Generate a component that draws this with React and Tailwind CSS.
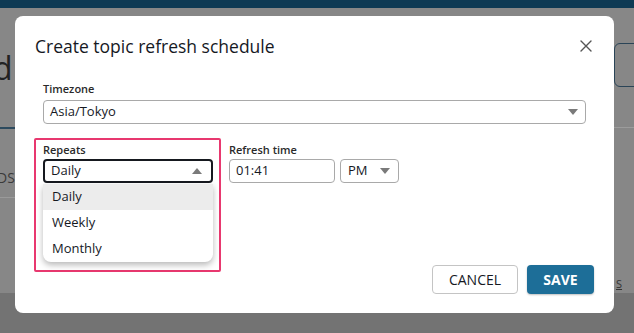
const font = { fontFamily: '"Open Sans", "Noto Sans", sans-serif' };

function Caret({ up = false, className = "" }) {
  return (
    <svg width="10" height="6" viewBox="0 0 10 6" className={className}>
      {up ? <path d="M0 6 L5 0 L10 6 Z" fill="#7a7a7a" /> : <path d="M0 0 L10 0 L5 6 Z" fill="#7a7a7a" />}
    </svg>
  );
}

function Backdrop() {
  return (
    <div className="w-[634px] h-[333px] flex flex-col bg-[#878787] overflow-hidden">
      <div className="h-[8px] bg-[#0e3a54]" />
      <div className="flex-1 flex justify-between">
        {/* left strip of page behind */}
        <div className="w-[15px] flex flex-col">
          <div className="h-[40px]" />
          <div className="text-[32px] leading-[40px] text-[#222] -ml-[7px]">d</div>
          <div className="h-[39px]" />
          <div className="h-[2px] bg-[#2c4a5e]" />
          <div className="h-[40px]" />
          <div className="text-[14px] leading-[18px] text-[#3a3a3a] -ml-[3px]">DS</div>
          <div className="h-[10px]" />
          <div className="h-px bg-[#9a9a9a]" />
        </div>
        {/* right strip */}
        <div className="w-[20px] flex flex-col">
          <div className="h-[35px]" />
          <div className="h-[44px] w-[30px] border-[1.5px] border-[#2a4457] rounded-[6px]" />
          <div className="h-[40px]" />
          <div className="h-px bg-[#9c9c9c]" />
          <div className="h-[149px]" />
          <div className="text-[11px] leading-[14px] text-[#333] underline pl-[2px]">S</div>
        </div>
      </div>
      <div className="h-[40px] bg-[#737373]" />
    </div>
  );
}

export default function App() {
  return (
    <div className="relative w-[634px] h-[333px] overflow-hidden" style={font}>
      <Backdrop />

      <div className="absolute left-[15px] top-[16px] w-[599px] h-[297px] bg-white rounded-[8px] flex flex-col">
        {/* header */}
        <div className="flex items-center justify-between pl-[20px] pr-[22px] pt-[18px] h-[42px]">
          <h1 className="text-[17.5px] leading-[24px] text-[#16191f] font-normal">Create topic refresh schedule</h1>
          <svg width="12" height="12" viewBox="0 0 12 12">
            <path d="M1 1 L11 11 M11 1 L1 11" stroke="#555" strokeWidth="1.4" strokeLinecap="round" />
          </svg>
        </div>

        <div className="px-[28px] pt-[24px]">
          <div className="text-[11px] leading-[14px] font-semibold text-[#2a2a2a] mb-[4px]">Timezone</div>
          <div className="h-[24px] border border-[#a9a9a9] rounded-[4px] flex items-center justify-between pl-[6px] pr-[7px]">
            <span className="text-[13px] text-[#16191f]">Asia/Tokyo</span>
            <Caret />
          </div>

          <div className="flex gap-[16px] mt-[19px]">
            {/* Repeats */}
            <div className="relative w-[170px]">
              <div className="absolute -left-[9px] -top-[5px] w-[187px] h-[134px] border-2 border-[#e8386f] rounded-[2px] pointer-events-none" />
              <div className="text-[11px] leading-[14px] font-semibold text-[#2a2a2a] mb-[2px]">Repeats</div>
              <div className="h-[24px] border-2 border-[#16191f] rounded-[4px] flex items-center justify-between pl-[6px] pr-[9px]">
                <span className="text-[13px] text-[#16191f]">Daily</span>
                <Caret up />
              </div>
              <div className="absolute left-0 top-[41px] w-[170px] bg-white rounded-b-[8px] shadow-[0_3px_6px_rgba(0,0,0,0.28)] overflow-hidden">
                {["Daily", "Weekly", "Monthly"].map((o, i) => (
                  <div
                    key={o}
                    className={`h-[26px] flex items-center pl-[9px] text-[13px] text-[#16191f] ${i === 0 ? "bg-[#ececec]" : ""}`}
                  >
                    {o}
                  </div>
                ))}
              </div>
            </div>

            {/* Refresh time */}
            <div>
              <div className="text-[11px] leading-[14px] font-semibold text-[#2a2a2a] mb-[2px]">Refresh time</div>
              <div className="flex gap-[5px]">
                <div className="w-[106px] h-[24px] border border-[#a9a9a9] rounded-[4px] flex items-center pl-[6px]">
                  <span className="text-[13px] text-[#16191f]">01:41</span>
                </div>
                <div className="w-[59px] h-[24px] border border-[#a9a9a9] rounded-[4px] flex items-center justify-between pl-[7px] pr-[8px]">
                  <span className="text-[13px] text-[#16191f]">PM</span>
                  <Caret />
                </div>
              </div>
            </div>
          </div>
        </div>

        {/* footer */}
        <div className="mt-auto flex justify-end gap-[9px] pr-[20px] pb-[19px]">
          <button className="w-[86px] h-[29px] border border-[#c4c4c4] rounded-[4px] bg-white text-[14px] font-medium text-[#16191f]">
            CANCEL
          </button>
          <button className="w-[67px] h-[29px] rounded-[4px] bg-[#1d6e98] text-[14px] font-bold text-white shadow-[0_1px_2px_rgba(0,0,0,0.25)]">
            SAVE
          </button>
        </div>
      </div>
    </div>
  );
}
